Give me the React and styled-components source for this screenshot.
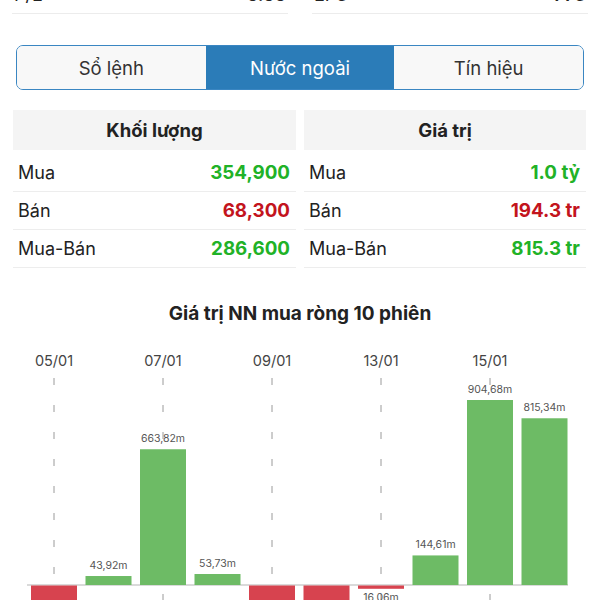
import React from 'react';
import styled, { createGlobalStyle } from 'styled-components';

const GlobalStyle = createGlobalStyle`
  body {
    margin: 0;
    background: #fff;
    font-family: Inter, "Noto Sans", "Liberation Sans", sans-serif;
    color: #222;
    overflow: hidden;
  }
`;

const Page = styled.div`
  width: 600px;
  height: 600px;
  overflow: hidden;
`;

const StatsGrid = styled.div`
  display: grid;
  grid-template-columns: 1fr 1fr;
  gap: 24px;
  padding: 0 12px;
  margin-top: -24px;
`;

const StatRow = styled.div`
  display: flex;
  justify-content: space-between;
  align-items: center;
  height: 37px;
  border-bottom: 1px solid #ececec;
  font-size: 18px;
  padding: 0 2px;

  b { font-weight: 600; }
`;

const Segmented = styled.div`
  display: flex;
  margin: 31px 16px 0;
  height: 43px;
  border: 1.5px solid #3a86c2;
  border-radius: 7px;
  overflow: hidden;
`;

const Segment = styled.div`
  flex: 1;
  display: flex;
  align-items: center;
  justify-content: center;
  font-size: 18.5px;
  background: ${p => (p.$active ? '#2b7cb8' : '#f8f8f8')};
  color: ${p => (p.$active ? '#fff' : '#333')};
`;

const Tables = styled.div`
  display: grid;
  grid-template-columns: 283px 282px;
  gap: 8px;
  padding: 0 14px 0 13px;
  margin-top: 20px;
`;

const Table = styled.div`
  display: flex;
  flex-direction: column;
`;

const TableHead = styled.div`
  height: 40px;
  display: flex;
  align-items: center;
  justify-content: center;
  background: #f4f4f4;
  font-size: 18.5px;
  font-weight: 700;
  color: #222;
  margin-bottom: 4px;
`;

const Row = styled.div`
  display: flex;
  align-items: center;
  justify-content: space-between;
  height: 37px;
  border-bottom: 1px solid #ededed;
  padding: 0 6px 0 5px;
  font-size: 18px;
  color: #222;
`;

const Value = styled.span`
  font-weight: 700;
  font-size: 18.8px;
  color: ${p => (p.$up ? '#21b227' : '#c3141d')};
`;

const ChartTitle = styled.div`
  text-align: center;
  font-size: 19px;
  font-weight: 700;
  color: #222;
  margin-top: 36px;
  line-height: 20px;
`;

const ChartBox = styled.div`
  height: 260px;
  margin-top: 17px;

  svg { display: block; overflow: visible; }
`;

const volume = [
  { label: 'Mua', value: '354,900', up: true },
  { label: 'Bán', value: '68,300', up: false },
  { label: 'Mua-Bán', value: '286,600', up: true },
];

const money = [
  { label: 'Mua', value: '1.0 tỷ', up: true },
  { label: 'Bán', value: '194.3 tr', up: false },
  { label: 'Mua-Bán', value: '815.3 tr', up: true },
];

const bars = [
  { v: -160, date: '05/01' },
  { v: 43.92 },
  { v: 663.82, date: '07/01' },
  { v: 53.73 },
  { v: -140, date: '09/01' },
  { v: -150 },
  { v: -16.06, date: '13/01' },
  { v: 144.61 },
  { v: 904.68, date: '15/01' },
  { v: 815.34 },
];

const fmt = v => Math.abs(v).toFixed(2).replace('.', ',') + 'm';

function NetChart() {
  const base = 244;
  const scale = 185 / 904.68;
  const step = 54.5;
  const w = 46;
  const x0 = 31;
  return (
    <svg width="600" height="260" viewBox="0 0 600 260">
      {bars.map((b, i) =>
        b.date ? (
          <g key={'d' + i}>
            <text x={x0 + w / 2 + step * i} y={25} textAnchor="middle" fontSize="14.5" fill="#444"
              fontFamily="Inter, 'Noto Sans', sans-serif">{b.date}</text>
            <line x1={x0 + w / 2 + step * i} x2={x0 + w / 2 + step * i} y1={37} y2={270}
              stroke="#9a9a9a" strokeWidth="1" strokeDasharray="7 20" />
          </g>
        ) : null
      )}
      <line x1="27" x2="568" y1={base} y2={base} stroke="#b5b5b5" strokeWidth="1" />
      {bars.map((b, i) => {
        const h = Math.max(Math.abs(b.v) * scale, 3);
        const x = x0 + step * i;
        const up = b.v > 0;
        return (
          <g key={'b' + i}>
            <rect x={x} y={up ? base - h : base + 0.5} width={w} height={h}
              fill={up ? '#6dbb65' : '#d7434f'} />
            <text x={x + w / 2} y={up ? base - h - 7 : base + h + 13} textAnchor="middle"
              fontSize="10.5" fill="#555" fontFamily="Inter, 'Noto Sans', sans-serif">{fmt(b.v)}</text>
          </g>
        );
      })}
    </svg>
  );
}

export default function App() {
  return (
    <Page>
      <GlobalStyle />
      <StatsGrid>
        <StatRow><span>P/E</span><b>5.55</b></StatRow>
        <StatRow><span>EPS</span><b>773</b></StatRow>
      </StatsGrid>
      <Segmented>
        <Segment>Sổ lệnh</Segment>
        <Segment $active>Nước ngoài</Segment>
        <Segment>Tín hiệu</Segment>
      </Segmented>
      <Tables>
        <Table>
          <TableHead>Khối lượng</TableHead>
          {volume.map(r => (
            <Row key={r.label}><span>{r.label}</span><Value $up={r.up}>{r.value}</Value></Row>
          ))}
        </Table>
        <Table>
          <TableHead>Giá trị</TableHead>
          {money.map(r => (
            <Row key={r.label}><span>{r.label}</span><Value $up={r.up}>{r.value}</Value></Row>
          ))}
        </Table>
      </Tables>
      <ChartTitle>Giá trị NN mua ròng 10 phiên</ChartTitle>
      <ChartBox>
        <NetChart />
      </ChartBox>
    </Page>
  );
}
